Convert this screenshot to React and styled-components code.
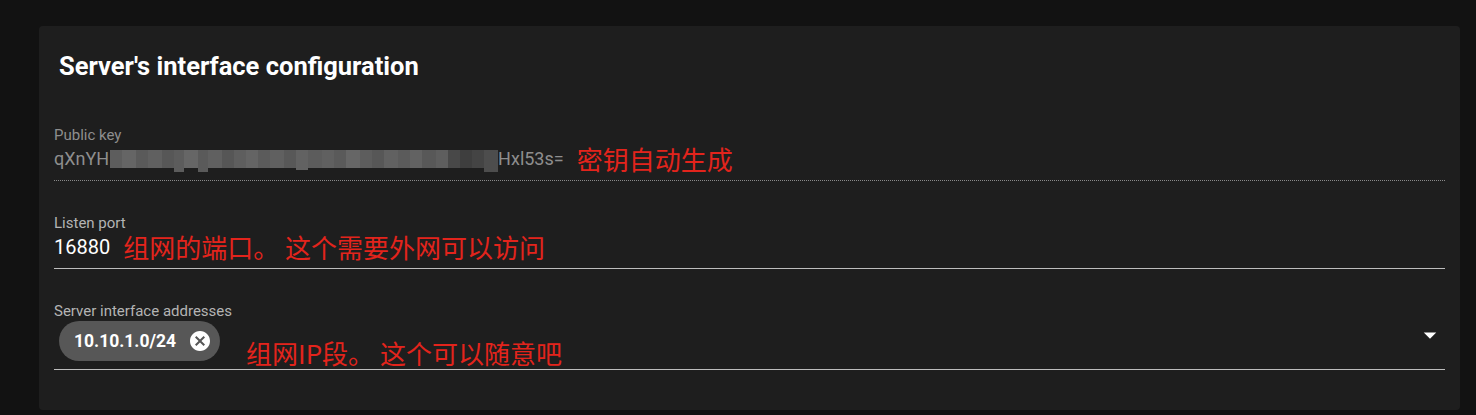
import React from "react";
import styled, { createGlobalStyle } from "styled-components";

const Global = createGlobalStyle`
  html, body { margin: 0; padding: 0; background: #121212; }
  body { font-family: Roboto, "Noto Sans", "Noto Sans CJK SC", sans-serif; }
  * { box-sizing: border-box; }
`;

const Page = styled.div`
  padding: 26px 16px 5px 39px;
  min-height: 415px;
`;

const Card = styled.section`
  background: #1e1e1e;
  border-radius: 4px;
  padding: 20px 15px 40px;
`;

const Title = styled.h2`
  margin: 0 0 40px 5px;
  font-size: 25.5px;
  line-height: 40px;
  font-weight: 700;
  color: #ffffff;
`;

const Field = styled.div`
  & + & { margin-top: 33px; }
`;

const Label = styled.div`
  font-size: 15px;
  line-height: 18px;
  color: ${(p) => (p.$disabled ? "#8e8e8e" : "#b4b4b4")};
`;

const InputRow = styled.div`
  position: relative;
  display: flex;
  align-items: center;
  min-height: ${(p) => p.$h || 36}px;
  padding: 0 0 ${(p) => p.$pb || 6}px;
  border-bottom: 1px ${(p) => (p.$dotted ? "dotted #8a8a8a" : "solid #bdbdbd")};
`;

const Value = styled.span`
  font-size: ${(p) => p.$size || 20}px;
  line-height: 24px;
  color: ${(p) => (p.$disabled ? "#8e8e8e" : "#ffffff")};
  white-space: nowrap;
`;

const Note = styled.span`
  display: block;
  height: 30px;
  font-family: "Noto Sans CJK SC", "Noto Sans", sans-serif;
  font-size: 26px;
  line-height: 30px;
  color: #e3241c;
  white-space: pre;
  margin-left: ${(p) => p.$gap || 12}px;
  align-self: ${(p) => (p.$bottom ? "flex-end" : "center")};
  margin-bottom: ${(p) => (p.$bottom ? "-7px" : "0")};
`;

const Mosaic = styled.span`
  display: inline-flex;
  align-items: center;
  height: 24px;
  margin-left: 1px;
`;

const Tile = styled.span`
  display: inline-block;
  width: ${(p) => p.$w}px;
  height: ${(p) => p.$h}px;
  background: ${(p) => p.$c};
  margin-top: ${(p) => p.$dy}px;
`;

const Chip = styled.div`
  display: inline-flex;
  align-items: center;
  height: 40px;
  margin: 1px 0 0 5px;
  padding: 0 8px 0 15px;
  border-radius: 20px;
  background: #575757;
  color: #ffffff;
  font-size: 17.5px;
  font-weight: 700;
  align-self: flex-start;
`;

const ChipText = styled.span`
  margin-right: 12px;
`;

const ArrowBox = styled.span`
  position: absolute;
  right: 0;
  top: 0;
  width: 30px;
  height: 30px;
  display: flex;
`;

const CancelIcon = () => (
  <svg width="24" height="24" viewBox="0 0 24 24" fill="#ffffff">
    <path d="M12 2C6.47 2 2 6.47 2 12s4.47 10 10 10 10-4.47 10-10S17.53 2 12 2zm5 13.59L15.59 17 12 13.41 8.41 17 7 15.59 10.59 12 7 8.41 8.41 7 12 10.59 15.59 7 17 8.41 13.41 12 17 15.59z" />
  </svg>
);

const DropIcon = () => (
  <svg width="30" height="30" viewBox="0 0 24 24" fill="#ffffff">
    <path d="M7 10l5 5 5-5z" />
  </svg>
);

// blurred key segment: a strip of grey tiles
const tiles = [
  [12, 18, "#5d5d5d", 0], [14, 18, "#656565", 0], [12, 18, "#5a5a5a", 0],
  [14, 18, "#606060", 0], [12, 18, "#575757", 0], [10, 22, "#5c5c5c", 3],
  [14, 18, "#666666", 0], [10, 22, "#5a5a5a", 4], [14, 18, "#606060", 0],
  [12, 18, "#565656", 0], [12, 18, "#5e5e5e", 0], [12, 18, "#646464", 0],
  [12, 18, "#5b5b5b", 0], [14, 18, "#606060", 0], [12, 18, "#585858", 0],
  [12, 20, "#626262", 2], [14, 18, "#5c5c5c", 0], [12, 18, "#606060", 0],
  [12, 18, "#5a5a5a", 0], [14, 18, "#666666", 0], [12, 18, "#5d5d5d", 0],
  [12, 18, "#575757", 0], [14, 18, "#616161", 0], [12, 18, "#5b5b5b", 0],
  [12, 18, "#626262", 0], [14, 18, "#585858", 0], [12, 18, "#5e5e5e", 0],
  [12, 18, "#484848", 0], [12, 18, "#3e3e3e", 0], [12, 18, "#444444", 0],
  [14, 22, "#4d4d4d", 4],
];

export default function App() {
  return (
    <>
      <Global />
      <Page>
        <Card>
          <Title>Server's interface configuration</Title>

          <Field>
            <Label $disabled>Public key</Label>
            <InputRow $dotted>
              <Value $disabled $size={18}>qXnYH</Value>
              <Mosaic>
                {tiles.map(([w, h, c, dy], i) => (
                  <Tile key={i} $w={w} $h={h} $c={c} $dy={dy} />
                ))}
              </Mosaic>
              <Value $disabled $size={18}>Hxl53s=</Value>
              <Note $gap={13}>密钥自动生成</Note>
            </InputRow>
          </Field>

          <Field>
            <Label>Listen port</Label>
            <InputRow $h={37}>
              <Value>16880</Value>
              <Note $gap={13}>组网的端口。 这个需要外网可以访问</Note>
            </InputRow>
          </Field>

          <Field>
            <Label>Server interface addresses</Label>
            <InputRow $pb={8}>
              <Chip>
                <ChipText>10.10.1.0/24</ChipText>
                <CancelIcon />
              </Chip>
              <Note $gap={26} $bottom>组网IP段。 这个可以随意吧</Note>
              <ArrowBox>
                <DropIcon />
              </ArrowBox>
            </InputRow>
          </Field>
        </Card>
      </Page>
    </>
  );
}
